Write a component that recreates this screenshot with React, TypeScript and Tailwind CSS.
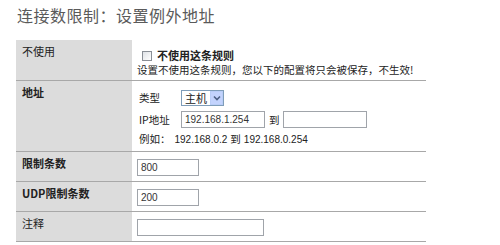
import React from 'react';

const font = { fontFamily: '"Noto Sans CJK SC", "Liberation Sans", sans-serif' };
const num = { fontFamily: '"Liberation Sans", sans-serif' };

const Row: React.FC<{ label: string; bold?: boolean; h: string; children: React.ReactNode }> = ({ label, bold, h, children }) => (
  <div className={`flex ${h} border-b border-[#a8a8a8]`}>
    <div className={`w-[116px] shrink-0 bg-[#dcdcdc] pl-[6px] pt-[5px] text-[11px] leading-[13px] text-[#222] whitespace-nowrap ${bold ? 'font-bold' : ''}`}>
      {label}
    </div>
    <div className="flex-1 pl-[5px] whitespace-nowrap">{children}</div>
  </div>
);

const TextBox: React.FC<{ value?: string; w: string }> = ({ value, w }) => (
  <div className={`${w} h-[17px] border border-[#a0a4aa] bg-white pl-[3px] text-[10px] leading-[15px] text-[#333]`} style={num}>
    {value}
  </div>
);

export default function App() {
  return (
    <div className="w-[500px] h-[245px] bg-white overflow-hidden" style={font}>
      <div className="pl-[17px] pt-[5px] h-[40px] text-[16px] leading-[20px] text-[#5a5a5a] tracking-[0.5px]">
        连接数限制：设置例外地址
      </div>
      <div className="ml-[16px] w-[410px]">
        <Row label="不使用" h="h-[41px]">
          <div className="pt-[9px] text-[10.5px] leading-[13px] text-[#222]">
            <div className="flex items-center gap-[5px] pl-[5px]">
              <span className="inline-block w-[10px] h-[10px] border border-[#8a8f96] bg-gradient-to-br from-[#dfe2e6] to-white"></span>
              <span className="font-bold text-[11px]">不使用这条规则</span>
            </div>
            <div className="mt-[1px]">设置不使用这条规则，您以下的配置将只会被保存，不生效!</div>
          </div>
        </Row>
        <Row label="地址" bold h="h-[71px]">
          <div className="pt-[8px] text-[10.5px] text-[#222]">
            <div className="flex items-center h-[17px]">
              <span className="w-[44px] pl-[2px]">类型</span>
              <div className="flex items-center h-[16px] w-[43px] border border-[#7f9db9] bg-white">
                <span className="flex-1 pl-[3px] text-[11px] leading-[14px]">主机</span>
                <span className="flex items-center justify-center w-[13px] h-[14px] bg-[#c3d3fd] border border-[#b9cdf7]">
                  <svg width="8" height="6" viewBox="0 0 8 6"><path d="M1 1.5 L4 4.5 L7 1.5" stroke="#4d6185" strokeWidth="1.6" fill="none" /></svg>
                </span>
              </div>
            </div>
            <div className="flex items-center h-[17px] mt-[5px]">
              <span className="w-[44px] pl-[2px]">IP地址</span>
              <TextBox value="192.168.1.254" w="w-[84px]" />
              <span className="pl-[4px] pr-[3px]">到</span>
              <TextBox w="w-[84px]" />
            </div>
            <div className="flex items-center h-[16px] mt-[3px] pl-[2px]">
              <span>例如：</span>
              <span className="ml-[4px] text-[10px]" style={num}>192.168.0.2</span>
              <span className="mx-[3px]">到</span>
              <span className="text-[10px]" style={num}>192.168.0.254</span>
            </div>
          </div>
        </Row>
        <Row label="限制条数" bold h="h-[30px]">
          <div className="pt-[7px]"><TextBox value="800" w="w-[62px]" /></div>
        </Row>
        <Row label="UDP限制条数" bold h="h-[30px]">
          <div className="pt-[7px]"><TextBox value="200" w="w-[62px]" /></div>
        </Row>
        <Row label="注释" h="h-[30px]">
          <div className="pt-[7px]"><TextBox w="w-[127px]" /></div>
        </Row>
      </div>
    </div>
  );
}
